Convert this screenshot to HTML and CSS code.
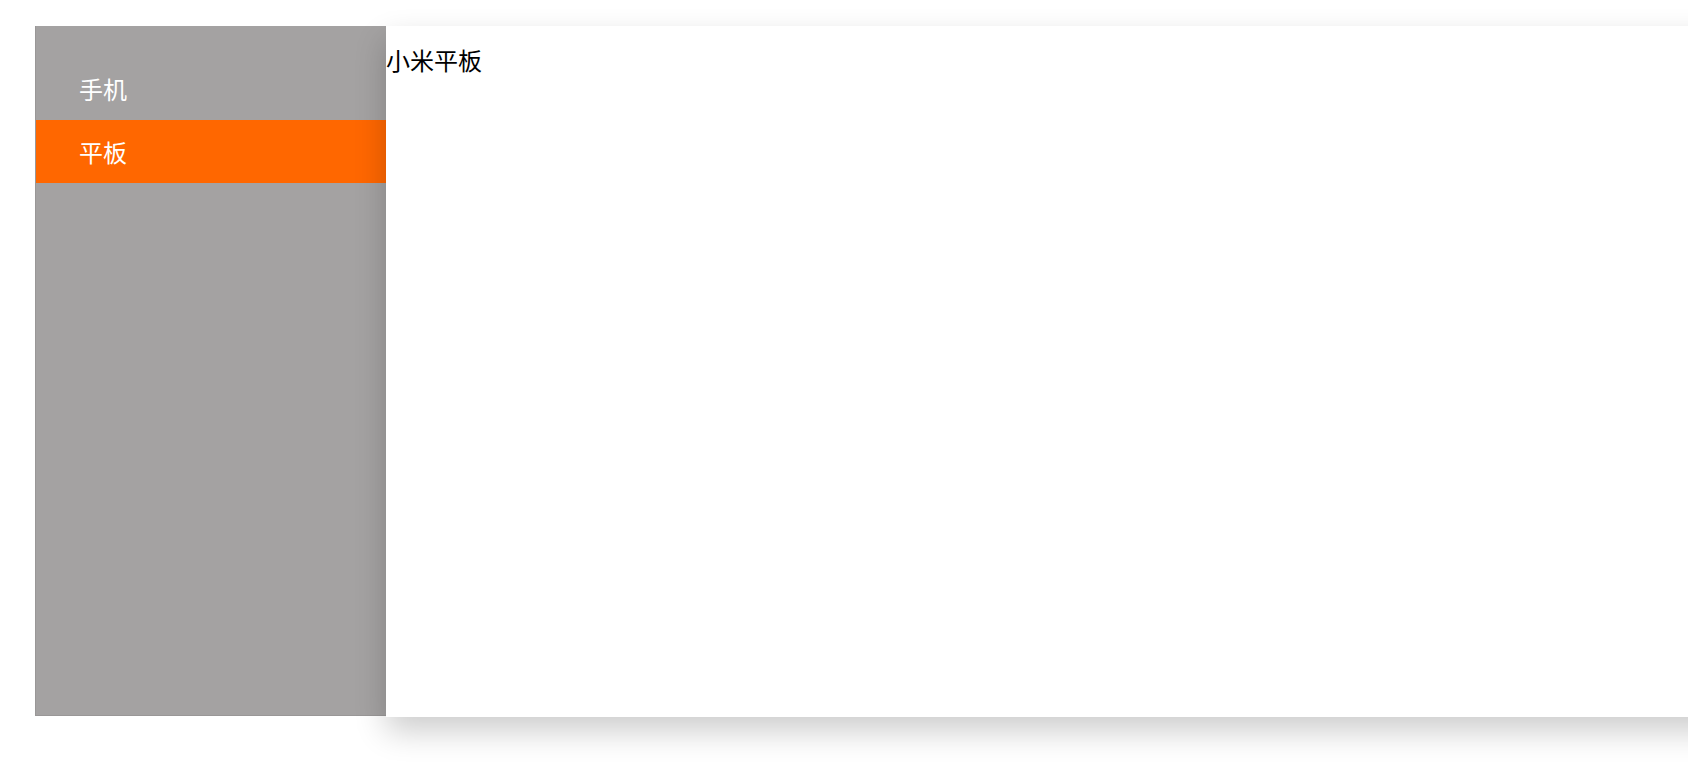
FILE: index.html
```html
<!DOCTYPE html>
<html lang="zh-CN">
<head>
<meta charset="utf-8">
<title>Tabs</title>
<link rel="stylesheet" href="styles.css">
</head>
<body>
<div class="layout">
  <ul class="menu">
    <li class="menu-item">手机</li>
    <li class="menu-item active">平板</li>
  </ul>
  <div class="panel">
    <div class="panel-text">小米平板</div>
  </div>
</div>
</body>
</html>
```

FILE: styles.css
```css
html {
  overflow: hidden;
}

body {
  margin: 0;
  padding: 0;
  background: #ffffff;
  font-family: "Noto Sans CJK SC", "Noto Sans", sans-serif;
}

.layout {
  display: flex;
  align-items: flex-start;
  padding: 26px 0 51px 35px;
  width: 2000px;
}

.menu {
  list-style: none;
  margin: 0;
  padding: 31px 0 0 0;
  width: 351px;
  height: 690px;
  box-sizing: border-box;
  background: #a4a2a2;
  border-left: 1px solid #999797;
  border-bottom: 1px solid #999797;
  flex: 0 0 auto;
}

.menu-item {
  height: 63px;
  line-height: 63px;
  padding-left: 43px;
  font-size: 24px;
  color: #ffffff;
}

.menu-item.active {
  background: #ff6700;
}

.panel {
  position: relative;
  z-index: 1;
  flex: 0 0 1400px;
  height: 691px;
  background: #ffffff;
  box-shadow: 0 14px 30px rgba(0, 0, 0, 0.2);
}

.panel-text {
  font-size: 24px;
  line-height: 34px;
  padding-top: 17px;
  color: #000000;
}
```
